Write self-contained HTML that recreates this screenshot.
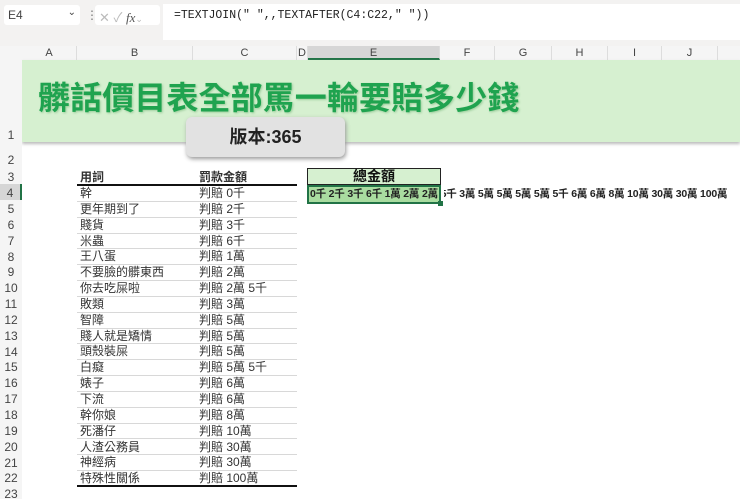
<!DOCTYPE html>
<html><head><meta charset="utf-8"><style>
*{margin:0;padding:0;box-sizing:border-box}
body{width:740px;height:499px;overflow:hidden;background:#fff;font-family:"Liberation Sans","Noto Sans CJK TC",sans-serif;position:relative}
.a{position:absolute}
.rh{position:absolute;left:0;width:22px;font-size:12px;color:#444;text-align:center;background:#f5f5f5}
.ch{position:absolute;top:46px;height:14px;font-size:11px;color:#444;text-align:center;line-height:14px;border-right:1px solid #ddd}
.cell{position:absolute;font-size:12px;color:#333;line-height:15px;white-space:nowrap}
.ln{position:absolute;left:77px;width:220px;height:1px;background:#d8d8d8}
</style></head><body>
<div class="a" style="left:0;top:0;width:740px;height:46px;background:#f3f2f1"></div>
<div class="a" style="left:4px;top:5px;width:76px;height:20px;background:#fff;border-radius:3px;font-size:12px;color:#444;padding:3px 4px">E4<span style="position:absolute;right:4px;top:2px;font-size:10px">⌄</span></div>
<div class="a" style="left:86px;top:8px;font-size:12px;color:#777">⋮</div>
<div class="a" style="left:95px;top:5px;width:65px;height:20px;background:#fff;border-radius:3px;font-size:13px;color:#bbb;padding:2px 4px">✕ ✓ <i style="color:#555;font-family:'Liberation Serif',serif">fx</i><span style="font-size:9px">⌄</span></div>
<div class="a" style="left:163px;top:4px;width:577px;height:36px;background:#fff"></div>
<div class="a" style="left:174px;top:9px;font-family:'Liberation Mono',monospace;font-size:11.5px;color:#222">=TEXTJOIN(" ",,TEXTAFTER(C4:C22," "))</div>
<div class="a" style="left:0;top:46px;width:740px;height:14px;background:#f5f5f5"></div>
<div class="ch" style="left:22px;width:55px">A</div>
<div class="ch" style="left:77px;width:116px">B</div>
<div class="ch" style="left:193px;width:104px">C</div>
<div class="ch" style="left:297px;width:11px">D</div>
<div class="ch" style="left:308px;width:132px;background:#d6d6d6;border-bottom:2px solid #217346">E</div>
<div class="ch" style="left:440px;width:55px">F</div>
<div class="ch" style="left:495px;width:57px">G</div>
<div class="ch" style="left:552px;width:56px">H</div>
<div class="ch" style="left:608px;width:54px">I</div>
<div class="ch" style="left:662px;width:56px">J</div>
<div class="a" style="left:22px;top:60px;width:718px;height:82px;background:#d6f0d0;box-shadow:0 2px 3px #bbb"></div>
<div class="a" style="left:38px;top:73px;font-size:32px;font-weight:bold;color:#1fa34f;letter-spacing:0.1px;text-shadow:1px 1px 2px #9c9">髒話價目表全部罵一輪要賠多少錢</div>
<div class="a" style="left:186px;top:117px;width:159px;height:40px;background:#e2e2e2;border-radius:6px;box-shadow:1px 2px 4px #999;text-align:center;line-height:40px;font-size:18px;font-weight:bold;color:#222">版本:365</div>
<div class="rh" style="top:60px;height:92px;line-height:150px">1</div>
<div class="rh" style="top:152px;height:16px;line-height:16px">2</div>
<div class="rh" style="top:168px;height:16px;line-height:18px">3</div>
<div class="rh" style="top:184px;height:16px;line-height:18px;background:#d6d6d6;border-right:2px solid #217346">4</div>
<div class="rh" style="top:200px;height:299px"></div>
<div class="a" style="left:0;top:202px;width:22px;font-size:12px;color:#444;text-align:center;line-height:15.85px">5<br>6<br>7<br>8<br>9<br>10<br>11<br>12<br>13<br>14<br>15<br>16<br>17<br>18<br>19<br>20<br>21<br>22<br>23</div>
<div class="cell" style="left:80px;top:170px;font-weight:bold">用詞</div>
<div class="cell" style="left:199px;top:170px;font-weight:bold">罰款金額</div>
<div class="a" style="left:77px;top:183.5px;width:220px;height:2px;background:#111"></div>
<div class="cell" style="left:80px;top:186px;line-height:15.85px">幹<br>更年期到了<br>賤貨<br>米蟲<br>王八蛋<br>不要臉的髒東西<br>你去吃屎啦<br>敗類<br>智障<br>賤人就是矯情<br>頭殼裝屎<br>白癡<br>婊子<br>下流<br>幹你娘<br>死潘仔<br>人渣公務員<br>神經病<br>特殊性關係</div>
<div class="cell" style="left:199px;top:186px;line-height:15.85px">判賠 0千<br>判賠 2千<br>判賠 3千<br>判賠 6千<br>判賠 1萬<br>判賠 2萬<br>判賠 2萬 5千<br>判賠 3萬<br>判賠 5萬<br>判賠 5萬<br>判賠 5萬<br>判賠 5萬 5千<br>判賠 6萬<br>判賠 6萬<br>判賠 8萬<br>判賠 10萬<br>判賠 30萬<br>判賠 30萬<br>判賠 100萬</div>
<div class="ln" style="top:201px"></div><div class="ln" style="top:217px"></div><div class="ln" style="top:233px"></div><div class="ln" style="top:248px"></div><div class="ln" style="top:264px"></div><div class="ln" style="top:280px"></div><div class="ln" style="top:296px"></div><div class="ln" style="top:312px"></div><div class="ln" style="top:328px"></div><div class="ln" style="top:343px"></div><div class="ln" style="top:359px"></div><div class="ln" style="top:375px"></div><div class="ln" style="top:391px"></div><div class="ln" style="top:407px"></div><div class="ln" style="top:423px"></div><div class="ln" style="top:438px"></div><div class="ln" style="top:454px"></div><div class="ln" style="top:470px"></div>
<div class="a" style="left:77px;top:485px;width:220px;height:2px;background:#111"></div>
<div class="a" style="left:307px;top:168px;width:134px;height:17px;background:#d6f0d0;border:1px solid #222;text-align:center;font-size:14px;font-weight:bold;line-height:15px;color:#111">總金額</div>
<div class="a" style="left:307px;top:185px;width:134px;height:19px;background:#a9dca0;border:2px solid #217346"></div>
<div class="a" style="left:438px;top:201px;width:5px;height:5px;background:#217346"></div>
<div class="cell" style="left:310px;top:187px;font-size:10.5px;font-weight:bold;color:#222;letter-spacing:-0.2px">0千 2千 3千 6千 1萬 2萬 2萬 5千 3萬 5萬 5萬 5萬 5萬 5千 6萬 6萬 8萬 10萬 30萬 30萬 100萬</div>
<div class="a" style="left:441px;top:187px;width:3px;height:14px;background:#fff"></div>
</body></html>
